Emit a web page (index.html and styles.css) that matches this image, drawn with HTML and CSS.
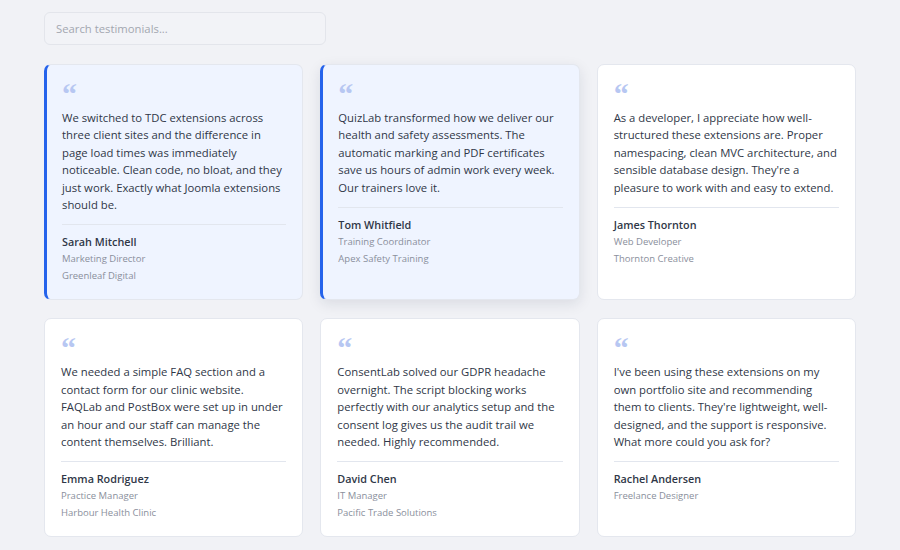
FILE: index.html
```html
<!DOCTYPE html>
<html>
<head>
<meta charset="utf-8">
<link rel="stylesheet" href="styles.css">
</head>
<body>
<div class="page">
  <input class="search" type="text" placeholder="Search testimonials...">
  <div class="grid">
    <div class="card featured">
      <div class="quote">&ldquo;</div>
      <p class="text">We switched to TDC extensions across three client sites and the difference in page load times was immediately noticeable. Clean code, no bloat, and they just work. Exactly what Joomla extensions should be.</p>
      <div class="author">
        <div class="name">Sarah Mitchell</div>
        <div class="meta">Marketing Director</div>
        <div class="meta">Greenleaf Digital</div>
      </div>
    </div>
    <div class="card featured raised">
      <div class="quote">&ldquo;</div>
      <p class="text">QuizLab transformed how we deliver our health and safety assessments. The automatic marking and PDF certificates save us hours of admin work every week. Our trainers love it.</p>
      <div class="author">
        <div class="name">Tom Whitfield</div>
        <div class="meta">Training Coordinator</div>
        <div class="meta">Apex Safety Training</div>
      </div>
    </div>
    <div class="card">
      <div class="quote">&ldquo;</div>
      <p class="text">As a developer, I appreciate how well-structured these extensions are. Proper namespacing, clean MVC architecture, and sensible database design. They're a pleasure to work with and easy to extend.</p>
      <div class="author">
        <div class="name">James Thornton</div>
        <div class="meta">Web Developer</div>
        <div class="meta">Thornton Creative</div>
      </div>
    </div>
    <div class="card">
      <div class="quote">&ldquo;</div>
      <p class="text">We needed a simple FAQ section and a contact form for our clinic website. FAQLab and PostBox were set up in under an hour and our staff can manage the content themselves. Brilliant.</p>
      <div class="author">
        <div class="name">Emma Rodriguez</div>
        <div class="meta">Practice Manager</div>
        <div class="meta">Harbour Health Clinic</div>
      </div>
    </div>
    <div class="card">
      <div class="quote">&ldquo;</div>
      <p class="text">ConsentLab solved our GDPR headache overnight. The script blocking works perfectly with our analytics setup and the consent log gives us the audit trail we needed. Highly recommended.</p>
      <div class="author">
        <div class="name">David Chen</div>
        <div class="meta">IT Manager</div>
        <div class="meta">Pacific Trade Solutions</div>
      </div>
    </div>
    <div class="card">
      <div class="quote">&ldquo;</div>
      <p class="text">I've been using these extensions on my own portfolio site and recommending them to clients. They're lightweight, well-designed, and the support is responsive. What more could you ask for?</p>
      <div class="author">
        <div class="name">Rachel Andersen</div>
        <div class="meta">Freelance Designer</div>
      </div>
    </div>
  </div>
</div>
</body>
</html>
```

FILE: styles.css
```css
html, body {
  margin: 0;
  padding: 0;
  background: #f1f2f6;
}
body {
  font-family: "Open Sans", "Noto Sans", sans-serif;
  color: #2f3747;
}
.page {
  padding: 12px 44px;
}
.search {
  display: block;
  box-sizing: border-box;
  width: 282px;
  height: 33px;
  margin: 0 0 19px 0;
  padding: 0 11px;
  border: 1px solid #e3e5eb;
  border-radius: 6px;
  background: #f2f3f7;
  font-family: "Open Sans", "Noto Sans", sans-serif;
  font-size: 11.3px;
  color: #2f3747;
  outline: none;
}
.search::placeholder {
  color: #a3a7b0;
}
.grid {
  display: grid;
  grid-template-columns: repeat(3, 1fr);
  column-gap: 17px;
  row-gap: 18px;
}
.card {
  background: #ffffff;
  border: 1px solid #e4e7ee;
  border-radius: 7px;
  padding: 16px 16px 15px 16px;
}
.card.featured {
  background: #eff4ff;
  border-left: 3px solid #2563eb;
  padding-left: 15px;
}
.card.raised {
  box-shadow: 0 4px 14px rgba(20, 30, 60, 0.10);
}
.quote {
  font-family: "Liberation Serif", serif;
  font-weight: bold;
  font-size: 30px;
  line-height: 26px;
  height: 24px;
  color: #b7c7f2;
}
.text {
  margin: 4px 0 0 0;
  font-size: 11.3px;
  line-height: 17.4px;
  color: #2f3747;
  padding-bottom: 11px;
  border-bottom: 1px solid #e2e6ee;
}
.author {
  padding-top: 8px;
}
.name {
  font-size: 10.8px;
  font-weight: 600;
  line-height: 17px;
  color: #2f3747;
}
.meta {
  font-size: 9.5px;
  line-height: 17px;
  color: #8a8f9c;
}
```
